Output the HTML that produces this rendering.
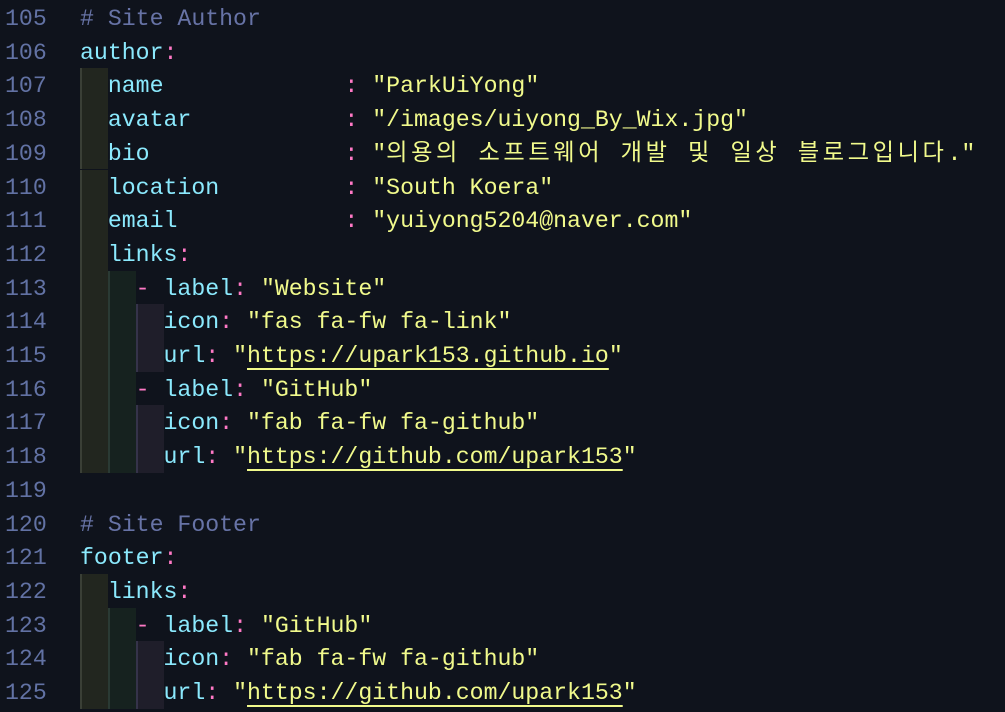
<!DOCTYPE html>
<html><head><meta charset="utf-8"><style>
html,body{margin:0;padding:0;background:#0f131c;width:1005px;height:712px;overflow:hidden}
body{position:relative;font-family:"Liberation Mono","Noto Sans CJK KR",monospace;font-size:23.2px}
.l{position:absolute;left:0;height:33.7px;line-height:33.7px;white-space:pre;width:1005px;overflow:hidden}
.n{position:absolute;left:5px;top:2px;color:#6272a4}
.t{position:absolute;left:80px;top:2px}
.c{color:#6773a6}.k{color:#8be9fd}.p{color:#ff79c6}.s{color:#f1fa8c}
.u{text-decoration:underline;text-decoration-color:#f1fa8c;text-underline-offset:6px;text-decoration-thickness:2px}
.g{position:absolute;top:0;height:33.7px}
.g0{left:80px;width:28px;background:#22261f;border-left:2px solid #3a3f36;box-sizing:border-box}
.g1{left:108px;width:28px;background:#16221f;border-left:2px solid #2a3a34;box-sizing:border-box}
.g2{left:136px;width:28px;background:#1f1e2a;border-left:2px solid #35334a;box-sizing:border-box}
.ko{letter-spacing:3.6px;line-height:1}
</style></head><body>
<div class="l" style="top:1px"><span class="n">105</span><span class="t c"># Site Author</span></div>
<div class="l" style="top:34.7px"><span class="n">106</span><span class="t"><span class="k">author</span><span class="p">:</span></span></div>
<div class="l" style="top:68.4px"><span class="n">107</span><div class="g g0"></div><span class="t">  <span class="k">name</span>             <span class="p">:</span> <span class="s">"ParkUiYong"</span></span></div>
<div class="l" style="top:102.1px"><span class="n">108</span><div class="g g0"></div><span class="t">  <span class="k">avatar</span>           <span class="p">:</span> <span class="s">"/images/uiyong_By_Wix.jpg"</span></span></div>
<div class="l" style="top:135.8px"><span class="n">109</span><div class="g g0"></div><span class="t">  <span class="k">bio</span>              <span class="p">:</span> <span class="s">"<span class="ko">의용의 소프트웨어 개발 및 일상 블로그입니다</span>."</span></span></div>
<div class="l" style="top:169.5px"><span class="n">110</span><div class="g g0"></div><span class="t">  <span class="k">location</span>         <span class="p">:</span> <span class="s">"South Koera"</span></span></div>
<div class="l" style="top:203.2px"><span class="n">111</span><div class="g g0"></div><span class="t">  <span class="k">email</span>            <span class="p">:</span> <span class="s">"yuiyong5204@naver.com"</span></span></div>
<div class="l" style="top:236.9px"><span class="n">112</span><div class="g g0"></div><span class="t">  <span class="k">links</span><span class="p">:</span></span></div>
<div class="l" style="top:270.6px"><span class="n">113</span><div class="g g0"></div><div class="g g1"></div><span class="t">    <span class="p">-</span> <span class="k">label</span><span class="p">:</span> <span class="s">"Website"</span></span></div>
<div class="l" style="top:304.3px"><span class="n">114</span><div class="g g0"></div><div class="g g1"></div><div class="g g2"></div><span class="t">      <span class="k">icon</span><span class="p">:</span> <span class="s">"fas fa-fw fa-link"</span></span></div>
<div class="l" style="top:338px"><span class="n">115</span><div class="g g0"></div><div class="g g1"></div><div class="g g2"></div><span class="t">      <span class="k">url</span><span class="p">:</span> <span class="s">"<span class="u">https://upark153.github.io</span>"</span></span></div>
<div class="l" style="top:371.7px"><span class="n">116</span><div class="g g0"></div><div class="g g1"></div><span class="t">    <span class="p">-</span> <span class="k">label</span><span class="p">:</span> <span class="s">"GitHub"</span></span></div>
<div class="l" style="top:405.4px"><span class="n">117</span><div class="g g0"></div><div class="g g1"></div><div class="g g2"></div><span class="t">      <span class="k">icon</span><span class="p">:</span> <span class="s">"fab fa-fw fa-github"</span></span></div>
<div class="l" style="top:439.1px"><span class="n">118</span><div class="g g0"></div><div class="g g1"></div><div class="g g2"></div><span class="t">      <span class="k">url</span><span class="p">:</span> <span class="s">"<span class="u">https://github.com/upark153</span>"</span></span></div>
<div class="l" style="top:472.8px"><span class="n">119</span></div>
<div class="l" style="top:506.5px"><span class="n">120</span><span class="t c"># Site Footer</span></div>
<div class="l" style="top:540.2px"><span class="n">121</span><span class="t"><span class="k">footer</span><span class="p">:</span></span></div>
<div class="l" style="top:573.9px"><span class="n">122</span><div class="g g0"></div><span class="t">  <span class="k">links</span><span class="p">:</span></span></div>
<div class="l" style="top:607.6px"><span class="n">123</span><div class="g g0"></div><div class="g g1"></div><span class="t">    <span class="p">-</span> <span class="k">label</span><span class="p">:</span> <span class="s">"GitHub"</span></span></div>
<div class="l" style="top:641.3px"><span class="n">124</span><div class="g g0"></div><div class="g g1"></div><div class="g g2"></div><span class="t">      <span class="k">icon</span><span class="p">:</span> <span class="s">"fab fa-fw fa-github"</span></span></div>
<div class="l" style="top:675px"><span class="n">125</span><div class="g g0"></div><div class="g g1"></div><div class="g g2"></div><span class="t">      <span class="k">url</span><span class="p">:</span> <span class="s">"<span class="u">https://github.com/upark153</span>"</span></span></div>
</body></html>
